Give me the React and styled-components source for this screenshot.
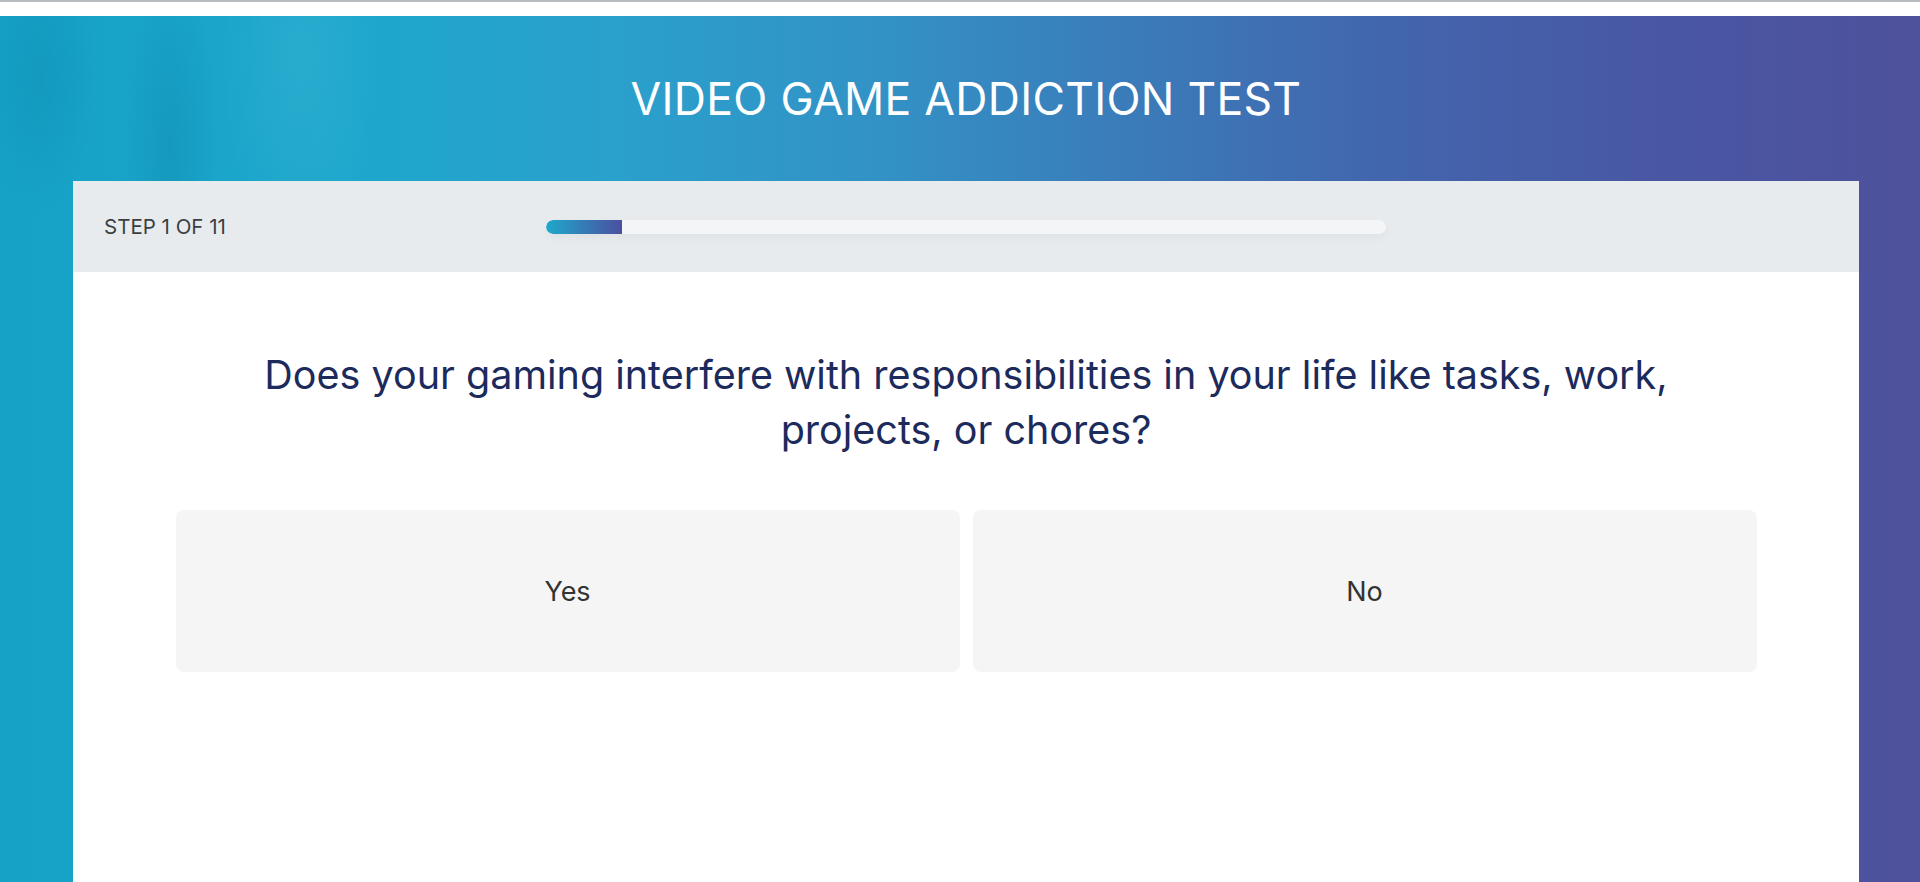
import styled, { createGlobalStyle } from 'styled-components';

const GlobalStyle = createGlobalStyle`
  html, body {
    margin: 0;
    padding: 0;
    height: 100%;
    overflow: hidden;
  }
  body {
    font-family: Inter, "Noto Sans", sans-serif;
    background: #ffffff;
  }
  #root {
    height: 100%;
  }
`

const Page = styled.div`
  display: flex;
  flex-direction: column;
  height: 100%;
`

const BrowserStrip = styled.div`
  height: 14px;
  flex: none;
  background: #ffffff;
  border-top: 2px solid #b9bcbf;
`

const Hero = styled.main`
  flex: 1;
  display: flex;
  flex-direction: column;
  background:
    radial-gradient(ellipse 70px 260px at 170px 130px, rgba(10, 110, 150, 0.22), transparent 70%),
    radial-gradient(ellipse 90px 200px at 40px 60px, rgba(10, 110, 150, 0.18), transparent 70%),
    radial-gradient(ellipse 120px 300px at 300px 40px, rgba(255, 255, 255, 0.06), transparent 70%),
    linear-gradient(90deg, #15a2c6 0%, #1da7cc 18%, #2aa0cc 32%, #3293c6 45%, #3a7dba 58%, #4266ad 72%, #4858a4 85%, #4e519c 100%);
  padding: 0 61px 0 73px;
`

const TitleRow = styled.div`
  height: 165px;
  display: flex;
  align-items: center;
  justify-content: center;
`

const Title = styled.h1`
  margin: 0;
  font-weight: 400;
  font-size: 44.5px;
  color: #ffffff;
  letter-spacing: 0.3px;
`

const Card = styled.section`
  flex: 1;
  background: #ffffff;
  display: flex;
  flex-direction: column;
`

const StepBar = styled.div`
  height: 91px;
  display: grid;
  grid-template-columns: 442px 840px;
  align-items: center;
  padding-left: 31px;
  background: #e8ebee;
`

const StepLabel = styled.span`
  font-size: 20.5px;
  color: #3a3f44;
  text-transform: uppercase;
`

const Track = styled.div`
  height: 14px;
  border-radius: 7px;
  background: #f3f5f7;
  box-shadow: 0 4px 8px rgba(0, 0, 0, 0.04);
  overflow: hidden;
`

const Fill = styled.div`
  height: 100%;
  border-radius: 7px 0 0 7px;
  background: linear-gradient(90deg, #1fa8cb, #4b4f9f);
`

const Body = styled.div`
  display: flex;
  flex-direction: column;
  align-items: center;
  padding: 76px 0 0;
`

const Question = styled.h2`
  margin: 0;
  max-width: 1480px;
  text-align: center;
  font-weight: 400;
  font-size: 39.5px;
  line-height: 55px;
  color: #1c2a5c;
`

const Answers = styled.div`
  margin-top: 52px;
  width: 1581px;
  display: grid;
  grid-template-columns: 1fr 1fr;
  gap: 13px;
`

const Answer = styled.button`
  height: 162px;
  border: none;
  border-radius: 8px;
  background: #f5f5f5;
  font-family: inherit;
  font-size: 27px;
  color: #333333;
  cursor: pointer;
`

const App = () => {
  const step = 1;
  const total = 11;
  return (
    <>
      <GlobalStyle />
      <Page>
        <BrowserStrip />
        <Hero>
          <TitleRow>
            <Title>VIDEO GAME ADDICTION TEST</Title>
          </TitleRow>
          <Card>
            <StepBar>
              <StepLabel>Step {step} of {total}</StepLabel>
              <Track>
                <Fill style={{ width: `${(step / total) * 100}%` }} />
              </Track>
            </StepBar>
            <Body>
              <Question>
                Does your gaming interfere with responsibilities in your life like tasks, work, projects, or chores?
              </Question>
              <Answers>
                <Answer>Yes</Answer>
                <Answer>No</Answer>
              </Answers>
            </Body>
          </Card>
        </Hero>
      </Page>
    </>
  )
}

export default App
